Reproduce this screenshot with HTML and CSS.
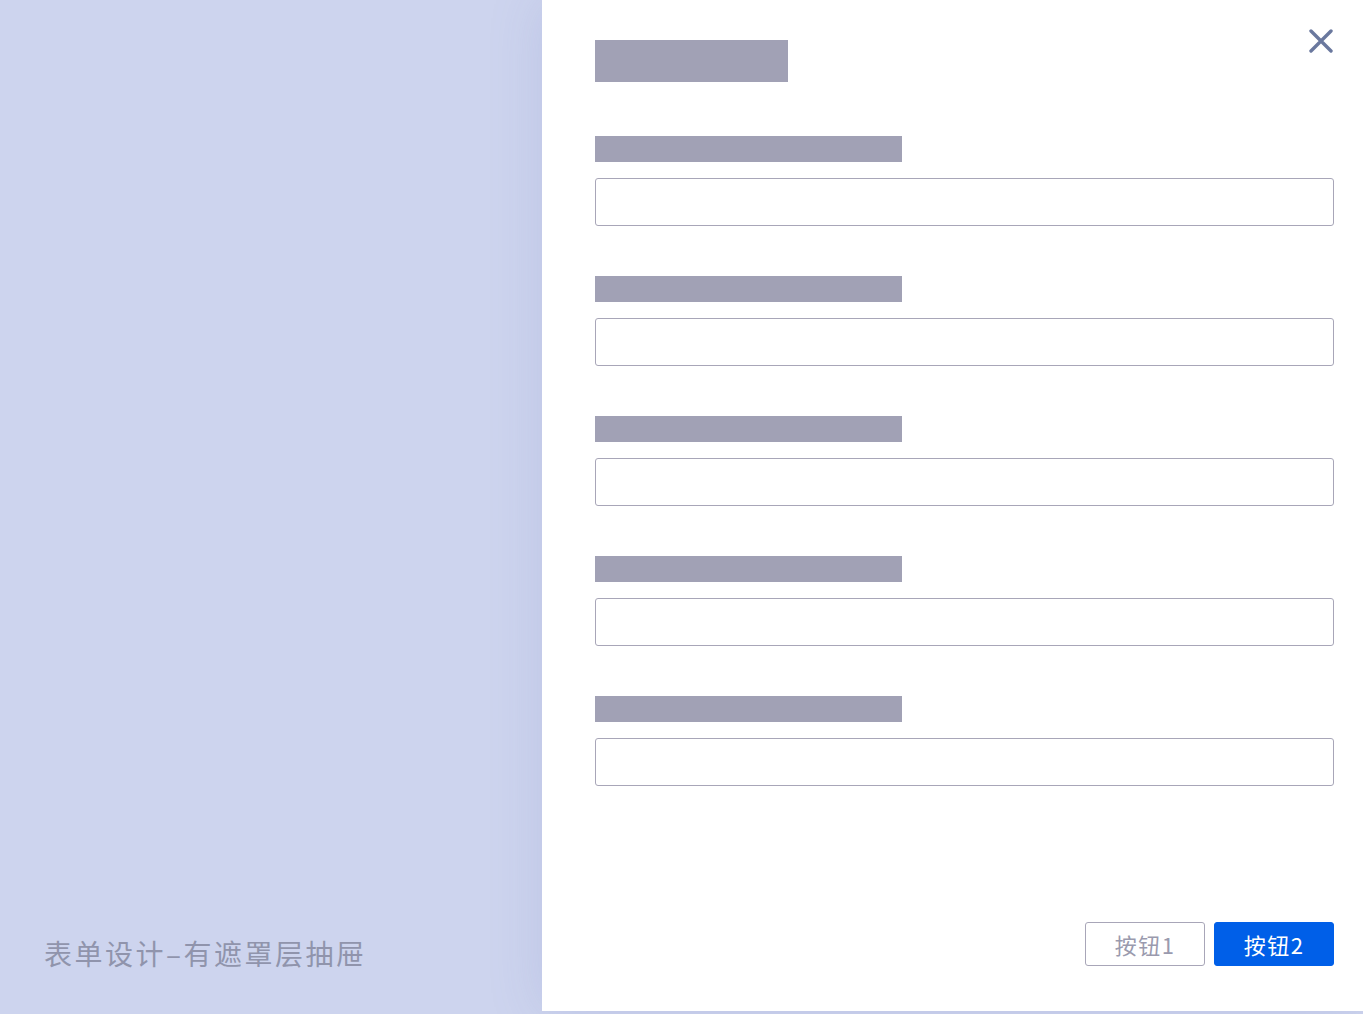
FILE: index.html
```html
<!DOCTYPE html>
<html lang="zh">
<head>
<meta charset="utf-8">
<title>表单设计-有遮罩层抽屉</title>
<link rel="stylesheet" href="styles.css">
</head>
<body>
<div class="page">
  <div class="mask">
    <div class="caption">表单设计–有遮罩层抽屉</div>
  </div>
  <div class="drawer">
    <div class="header">
      <div class="title-bar"></div>
      <button class="close" aria-label="关闭">
        <svg width="24" height="24" viewBox="0 0 24 24"><path d="M2 2 L22 22 M22 2 L2 22" stroke="#6A789E" stroke-width="3.4" stroke-linecap="round" fill="none"/></svg>
      </button>
    </div>
    <div class="form">
      <div class="field"><div class="label-bar"></div><div class="input"></div></div>
      <div class="field"><div class="label-bar"></div><div class="input"></div></div>
      <div class="field"><div class="label-bar"></div><div class="input"></div></div>
      <div class="field"><div class="label-bar"></div><div class="input"></div></div>
      <div class="field"><div class="label-bar"></div><div class="input"></div></div>
    </div>
    <div class="footer">
      <button class="btn btn-secondary">按钮1</button>
      <button class="btn btn-primary">按钮2</button>
    </div>
  </div>
</div>
</body>
</html>
```
FILE: styles.css
```css
html, body {
  margin: 0;
  padding: 0;
  background: #CDD4EE;
  font-family: "Noto Sans CJK SC", "Noto Sans", sans-serif;
}
.page {
  display: flex;
  width: 1363px;
  height: 1014px;
  overflow: hidden;
}
.mask {
  width: 542px;
  height: 1014px;
  display: flex;
  flex-direction: column;
  justify-content: flex-end;
  padding: 0 0 43px 44px;
  box-sizing: border-box;
}
.caption {
  font-size: 28px;
  line-height: 36px;
  color: #9094AC;
  letter-spacing: 2.5px;
  white-space: nowrap;
}
.drawer {
  width: 821px;
  height: 1011px;
  background: #FFFFFF;
  box-sizing: border-box;
  padding: 29px 29px 45px 53px;
  display: flex;
  flex-direction: column;
  box-shadow: 0 0 50px rgba(110, 120, 190, 0.18);
}
.header {
  display: flex;
  justify-content: space-between;
  align-items: flex-start;
}
.title-bar {
  width: 193px;
  height: 42px;
  margin-top: 11px;
  background: #A1A1B5;
}
.close {
  width: 24px;
  height: 24px;
  padding: 0;
  margin: 0 1px 0 0;
  border: none;
  background: none;
  display: flex;
}
.form {
  margin-top: 54px;
  display: flex;
  flex-direction: column;
  gap: 50px;
}
.field {
  display: flex;
  flex-direction: column;
  gap: 16px;
}
.label-bar {
  width: 307px;
  height: 26px;
  background: #A1A1B5;
}
.input {
  width: 739px;
  height: 48px;
  box-sizing: border-box;
  border: 1px solid #A8A6B8;
  border-radius: 3px;
  background: #FFFFFF;
}
.footer {
  margin-top: auto;
  display: flex;
  justify-content: flex-end;
  gap: 9px;
}
.btn {
  width: 120px;
  height: 44px;
  box-sizing: border-box;
  border-radius: 3px;
  font-family: "Noto Sans CJK SC", "Noto Sans", sans-serif;
  font-size: 22px;
  line-height: 1;
  padding: 0;
  letter-spacing: 1.5px;
}
.btn-secondary {
  background: #FFFFFF;
  border: 1px solid #A8A6B8;
  color: #9A9AAE;
}
.btn-primary {
  background: #005FE8;
  border: 1px solid #005FE8;
  color: #FFFFFF;
}
```
